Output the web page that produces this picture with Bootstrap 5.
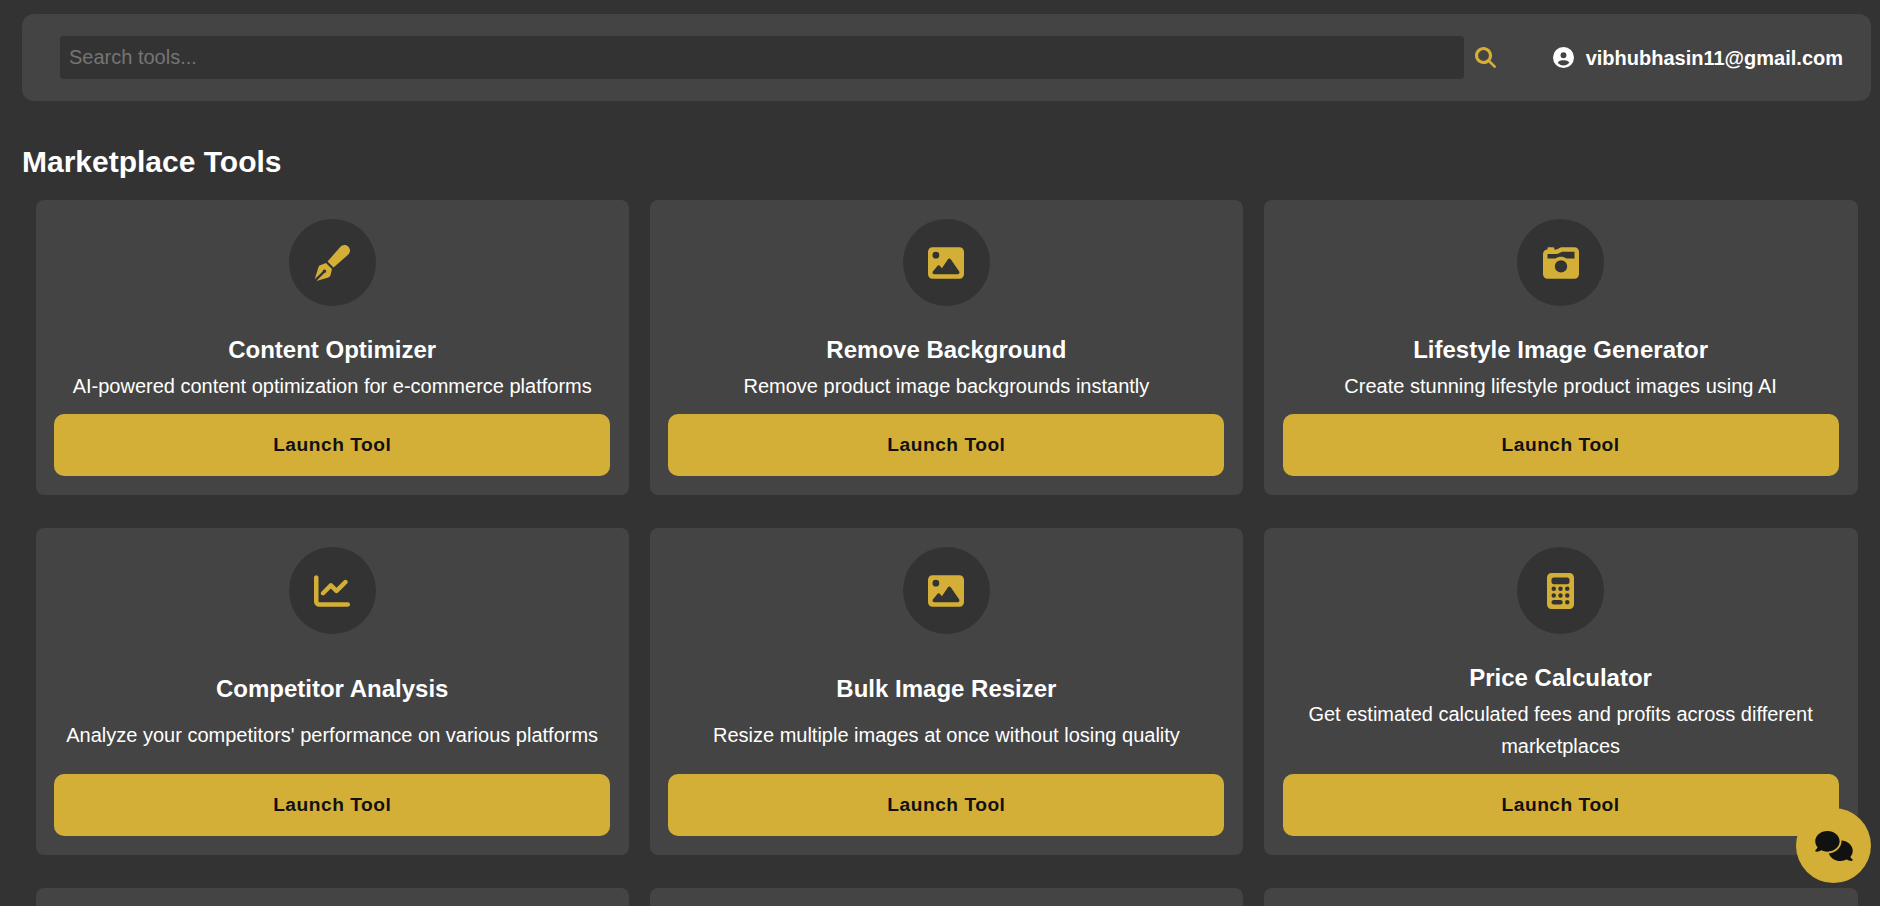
<!DOCTYPE html>
<html lang="en">
<head>
<meta charset="utf-8">
<title>Marketplace Tools</title>
<link href="https://cdn.jsdelivr.net/npm/bootstrap@5.3.0/dist/css/bootstrap.min.css" rel="stylesheet">
<style>
html, body { height: 100%; overflow: hidden; }
body { background: #333333; color: #fff; font-family: "Liberation Sans", Arial, sans-serif; }
.page-wrap { padding: 14px 9px 0 22px; }
.top-panel { background: #444444; border-radius: 12px; padding: 22px 28px 22px 38px; margin-bottom: 44px; }
.search-field.form-control { background: #333333; border: 0; border-radius: 4px; color: #fff; height: 43px; font-size: 20px; padding: 0 9px; box-shadow: none; }
.search-field.form-control::placeholder { color: #757575; opacity: 1; }
.search-btn { flex: none; margin-left: 11px; margin-right: 57px; color: #d4af37; line-height: 0; }
.search-btn svg { width: 21px; height: 21px; fill: currentColor; }
.user-mark { width: 21px; height: 21px; fill: #fff; margin-right: 12px; flex: none; }
.user-mail { font-size: 20px; font-weight: 700; white-space: nowrap; }
.page-heading { font-size: 30px; font-weight: 700; line-height: 34px; margin: 0 0 21px; }
.tool-grid { display: grid; grid-template-columns: repeat(3, 1fr); column-gap: 21px; row-gap: 33px; padding: 0 13.4px 0 14px; }
.tool-card.card { background: #444444; border: 0; border-radius: 8px; color: #fff; text-align: center; padding: 19px 19px 19px 18.2px; display: flex; flex-direction: column; justify-content: space-between; align-items: stretch; }
.tool-card-empty { height: 295px; }
.icon-disc { width: 87px; height: 87px; border-radius: 50%; background: #333333; color: #d4af37; margin: 0 auto 30px; display: flex; align-items: center; justify-content: center; }
.icon-disc svg { height: 36px; fill: currentColor; }
.tool-title { font-size: 24px; font-weight: 700; line-height: 27px; margin: 0 0 7px; }
.tool-text { font-size: 20px; line-height: 32px; margin: 0 0 12px; }
.launch-btn.btn { background: #d4af37; border: 0; border-radius: 10px; color: #111111; font-weight: 700; font-size: 19.2px; letter-spacing: .5px; height: 62px; width: 100%; display: flex; align-items: center; justify-content: center; }
.chat-bubble { position: fixed; right: 9px; bottom: 23px; width: 75px; height: 75px; border-radius: 50%; background: #d4af37; display: flex; align-items: center; justify-content: center; border: 0; padding: 0; z-index: 10; }
.chat-bubble svg { width: 38px; height: 30px; fill: #111111; }
</style>
</head>
<body>
<div class="page-wrap">
  <div class="top-panel d-flex align-items-center">
    <input class="form-control search-field flex-grow-1" type="text" placeholder="Search tools...">
    <span class="search-btn"><svg viewBox="0 0 512 512"><path d="M416 208c0 45.9-14.9 88.3-40 122.7L502.6 457.4c12.5 12.5 12.5 32.8 0 45.3s-32.8 12.5-45.3 0L330.7 376c-34.4 25.2-76.8 40-122.7 40C93.1 416 0 322.9 0 208S93.1 0 208 0S416 93.1 416 208zM208 340a132 132 0 1 0 0-264 132 132 0 1 0 0 264z"/></svg></span>
    <svg class="user-mark" viewBox="0 0 512 512"><path d="M399 384.2C376.9 345.8 335.4 320 288 320H224c-47.4 0-88.9 25.8-111 64.2c35.2 39.2 86.2 63.8 143 63.8s107.8-24.7 143-63.8zM0 256a256 256 0 1 1 512 0A256 256 0 1 1 0 256zm256 16a72 72 0 1 0 0-144 72 72 0 1 0 0 144z"/></svg>
    <span class="user-mail">vibhubhasin11@gmail.com</span>
  </div>

  <h1 class="page-heading">Marketplace Tools</h1>

  <div class="tool-grid">
    <div class="card tool-card">
      <div class="icon-disc"><svg viewBox="0 0 512 512"><path d="M373.5 27.1C388.5 9.9 410.2 0 433 0c43.6 0 79 35.4 79 79c0 22.8-9.9 44.6-27.1 59.6L277.7 319l-10.3-10.3-64-64L193 234.3 373.5 27.1zM170.3 256.9l10.4 10.4 64 64 10.4 10.4-19.2 83.4c-3.9 16.9-16.5 30.3-33.1 35.4L34 512l112.8-112.8c.4 0 .8 .1 1.2 .1c14 0 25.3-11.3 25.3-25.3s-11.3-25.3-25.3-25.3s-25.3 11.3-25.3 25.3c0 .4 .1 .8 .1 1.2L10 488 61.8 319.3c5.1-16.6 18.6-29.2 35.4-33.1l73.1-29.3z"/></svg></div>
      <h3 class="tool-title">Content Optimizer</h3>
      <p class="tool-text">AI-powered content optimization for e-commerce platforms</p>
      <a class="btn launch-btn" href="#">Launch Tool</a>
    </div>
    <div class="card tool-card">
      <div class="icon-disc"><svg viewBox="0 0 512 512"><path d="M0 96C0 60.7 28.7 32 64 32H448c35.3 0 64 28.7 64 64V416c0 35.3-28.7 64-64 64H64c-35.3 0-64-28.7-64-64V96zM323.8 202.5c-4.5-6.6-11.9-10.5-19.8-10.5s-15.4 3.9-19.8 10.5l-87 127.6L170.7 297c-4.6-5.7-11.5-9-18.7-9s-14.2 3.3-18.7 9l-64 80c-5.8 7.2-6.9 17.1-2.9 25.4s12.4 13.6 21.6 13.6h96 32H424c8.9 0 17.1-4.9 21.2-12.8s3.6-17.4-1.4-24.7l-120-176zM112 192a48 48 0 1 0 0-96 48 48 0 1 0 0 96z"/></svg></div>
      <h3 class="tool-title">Remove Background</h3>
      <p class="tool-text">Remove product image backgrounds instantly</p>
      <a class="btn launch-btn" href="#">Launch Tool</a>
    </div>
    <div class="card tool-card">
      <div class="icon-disc"><svg viewBox="0 0 512 512"><path d="M220.6 121.2L271.1 96 448 96v96H333.2c-21.9-15.1-48.5-24-77.2-24s-55.2 8.9-77.2 24H64V128H192c9.9 0 19.7-2.3 28.6-6.8zM0 128V416c0 35.3 28.7 64 64 64H448c35.3 0 64-28.7 64-64V96c0-35.3-28.7-64-64-64H271.1c-9.9 0-19.7 2.3-28.6 6.8L192 64H160V48c0-8.8-7.2-16-16-16H80c-8.8 0-16 7.2-16 16l0 16C28.7 64 0 92.7 0 128zM168 304a88 88 0 1 1 176 0 88 88 0 1 1 -176 0z"/></svg></div>
      <h3 class="tool-title">Lifestyle Image Generator</h3>
      <p class="tool-text">Create stunning lifestyle product images using AI</p>
      <a class="btn launch-btn" href="#">Launch Tool</a>
    </div>
    <div class="card tool-card">
      <div class="icon-disc"><svg viewBox="0 0 512 512"><path d="M64 64c0-17.7-14.3-32-32-32S0 46.3 0 64V400c0 44.2 35.8 80 80 80H480c17.7 0 32-14.3 32-32s-14.3-32-32-32H80c-8.8 0-16-7.2-16-16V64zm406.6 86.6c12.5-12.5 12.5-32.8 0-45.3s-32.8-12.5-45.3 0L320 210.7l-57.4-57.4c-12.5-12.5-32.8-12.5-45.3 0l-112 112c-12.5 12.5-12.5 32.8 0 45.3s32.8 12.5 45.3 0L240 221.3l57.4 57.4c12.5 12.5 32.8 12.5 45.3 0l128-128z"/></svg></div>
      <h3 class="tool-title">Competitor Analysis</h3>
      <p class="tool-text">Analyze your competitors' performance on various platforms</p>
      <a class="btn launch-btn" href="#">Launch Tool</a>
    </div>
    <div class="card tool-card">
      <div class="icon-disc"><svg viewBox="0 0 512 512"><path d="M0 96C0 60.7 28.7 32 64 32H448c35.3 0 64 28.7 64 64V416c0 35.3-28.7 64-64 64H64c-35.3 0-64-28.7-64-64V96zM323.8 202.5c-4.5-6.6-11.9-10.5-19.8-10.5s-15.4 3.9-19.8 10.5l-87 127.6L170.7 297c-4.6-5.7-11.5-9-18.7-9s-14.2 3.3-18.7 9l-64 80c-5.8 7.2-6.9 17.1-2.9 25.4s12.4 13.6 21.6 13.6h96 32H424c8.9 0 17.1-4.9 21.2-12.8s3.6-17.4-1.4-24.7l-120-176zM112 192a48 48 0 1 0 0-96 48 48 0 1 0 0 96z"/></svg></div>
      <h3 class="tool-title">Bulk Image Resizer</h3>
      <p class="tool-text">Resize multiple images at once without losing quality</p>
      <a class="btn launch-btn" href="#">Launch Tool</a>
    </div>
    <div class="card tool-card">
      <div class="icon-disc"><svg viewBox="0 0 384 512"><path fill-rule="evenodd" d="M64 0C28.7 0 0 28.7 0 64V448c0 35.3 28.7 64 64 64H320c35.3 0 64-28.7 64-64V64c0-35.3-28.7-64-64-64H64zM96 64H288c17.7 0 32 14.3 32 32v32c0 17.7-14.3 32-32 32H96c-17.7 0-32-14.3-32-32V96c0-17.7 14.3-32 32-32zM64 224a32 32 0 1 0 64 0a32 32 0 1 0-64 0zM160 224a32 32 0 1 0 64 0a32 32 0 1 0-64 0zM256 224a32 32 0 1 0 64 0a32 32 0 1 0-64 0zM64 320a32 32 0 1 0 64 0a32 32 0 1 0-64 0zM160 320a32 32 0 1 0 64 0a32 32 0 1 0-64 0zM256 320a32 32 0 1 0 64 0a32 32 0 1 0-64 0zM256 416a32 32 0 1 0 64 0a32 32 0 1 0-64 0zM64 416c0-17.7 14.3-32 32-32h96c17.7 0 32 14.3 32 32s-14.3 32-32 32H96c-17.7 0-32-14.3-32-32z"/></svg></div>
      <h3 class="tool-title">Price Calculator</h3>
      <p class="tool-text">Get estimated calculated fees and profits across different marketplaces</p>
      <a class="btn launch-btn" href="#">Launch Tool</a>
    </div>
    <div class="card tool-card tool-card-empty"></div>
    <div class="card tool-card tool-card-empty"></div>
    <div class="card tool-card tool-card-empty"></div>
  </div>
</div>
<button class="chat-bubble" type="button" aria-label="Chat"><svg viewBox="0 0 640 512"><path d="M208 352c114.9 0 208-78.8 208-176S322.9 0 208 0S0 78.8 0 176c0 38.6 14.7 74.3 39.6 103.4c-3.5 9.4-8.7 17.7-14.2 24.7c-4.8 6.2-9.7 11-13.3 14.3c-1.8 1.6-3.3 2.9-4.3 3.7c-.5 .4-.9 .7-1.1 .8l-.2 .2 0 0 0 0C1 327.2-1.4 334.4 .8 340.9S9.1 352 16 352c21.8 0 43.8-5.6 62.1-12.5c9.2-3.5 17.8-7.4 25.3-11.4C134.1 343.3 169.8 352 208 352zM448 176c0 112.3-99.1 196.9-216.5 207C255.8 457.4 336.4 512 432 512c38.2 0 73.9-8.7 104.7-23.9c7.5 4 16 7.9 25.2 11.4c18.3 6.9 40.3 12.5 62.1 12.5c6.9 0 13.1-4.5 15.2-11.1c2.1-6.6-.2-13.8-5.8-17.9l0 0 0 0-.2-.2c-.2-.2-.6-.4-1.1-.8c-1-.8-2.5-2-4.3-3.7c-3.6-3.3-8.5-8.1-13.3-14.3c-5.5-7-10.7-15.4-14.2-24.7c24.9-29 39.6-64.7 39.6-103.4c0-92.8-84.9-168.9-192.6-175.5c.4 5.1 .6 10.3 .6 15.5z"/></svg></button>
<script src="https://cdn.jsdelivr.net/npm/bootstrap@5.3.0/dist/js/bootstrap.bundle.min.js"></script>
</body>
</html>
